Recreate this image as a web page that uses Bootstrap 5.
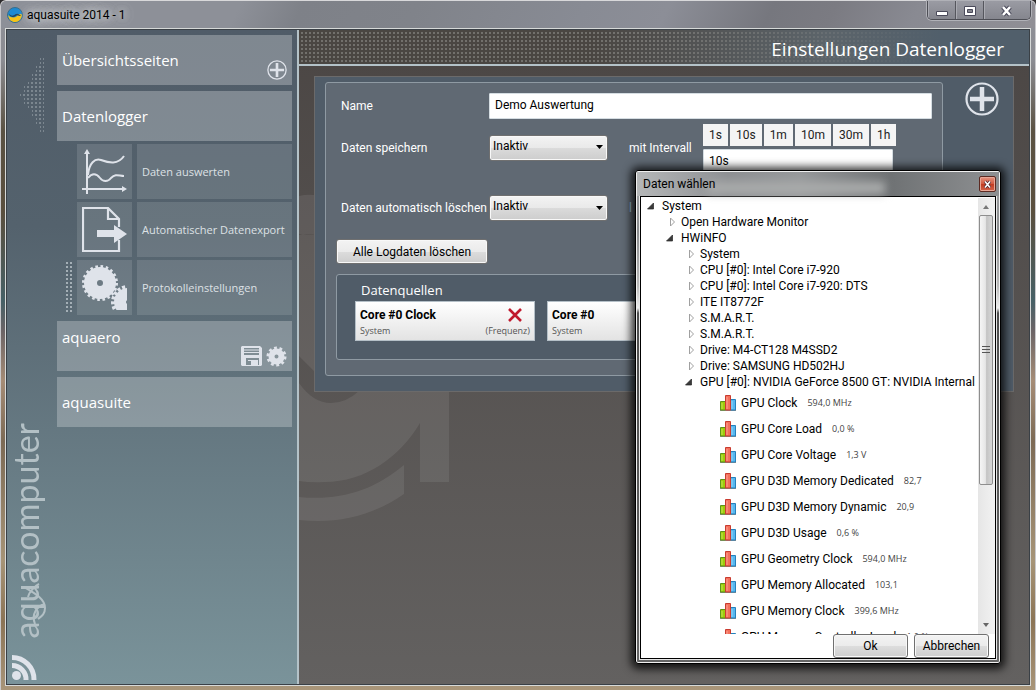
<!DOCTYPE html>
<html lang="de">
<head>
<meta charset="utf-8">
<meta name="viewport" content="width=device-width, initial-scale=1">
<title>aquasuite 2014 - 1</title>
<link href="https://cdn.jsdelivr.net/npm/bootstrap@5.3.0/dist/css/bootstrap.min.css" rel="stylesheet">
<style>
:root{--head:"Open Sans","Noto Sans",sans-serif;--line:#b4c2c8}
body{font:12px/16px Roboto,"Open Sans",sans-serif;color:#000;background:#2c2a2b}
a{color:inherit;text-decoration:none}
.app-window{min-height:100vh;padding:0 4px 4px;border:1px solid #c9c9cc;border-top-color:#d8d8da;border-bottom:0;border-radius:6px 6px 0 0;
 background:linear-gradient(180deg,#8f9198 0,#8b8c92 60px,#5a5243 130px,#5a4f3e 210px,#466066 300px,#6b6466 330px,#a58c76 380px,#7c6a55 440px,#a69477 560px,#8b7456 620px,#a89579 100%)}
.title-bar{height:27px;margin:0 -4px;padding-left:6px;border-radius:6px 6px 0 0;
 background:linear-gradient(115deg,#8d9098 0 23%,#7e8188 29%,#80838a 40%,#888b94 56%,#8c8e97 64%,#76777e 74%,#7b7b82 80%,#898a92 88%,#908f95 100%)}
.title-text{text-shadow:0 0 6px #d5d7da,0 0 10px #c2c5c9,0 0 14px #c2c5c9,0 0 16px #c2c5c9}
.win-buttons{height:19px;border:1px solid #4d4e55;border-top:0;border-radius:0 0 5px 5px;box-shadow:0 0 0 1px #b0b1b7;overflow:hidden}
.win-buttons button{border:0;border-right:1px solid #55565d;box-shadow:inset 1px 0 #aaabb2;background:linear-gradient(#9a9ba3,#85868e);padding:0;width:28px}
.win-buttons button:last-child{width:46px;border:0}
.client{border:1px solid #d6d9d8;outline:1px solid #3a4046;outline-offset:-2px;padding:1px}

/* navigation */
.side-panel{width:292px;background:linear-gradient(#505c68 0,#54626d 30%,#7a939a 100%);border-right:2px solid var(--line);padding:5px 5px 0 0}
.rail{width:50px;padding:23px 0 3px 4px}
.brand{writing-mode:vertical-rl;transform:rotate(180deg);font:34px/30px Lato,sans-serif;color:#b3c0c5}
.swash{position:absolute;left:0;bottom:27px}
.menu-tile{height:50px;padding:0 5px;background:rgba(255,255,255,.27);font:15px/20px var(--head);color:#fff}
.menu-tile.lit{background:rgba(255,255,255,.25)}
.menu-stack{gap:6px}
.sub-list{gap:3px;margin-top:-3px}
.sub-tile{height:55px;background:rgba(255,255,255,.12);color:#dde1e5;font:11px/16px var(--head)}
.sub-icon{width:55px}
.sub-name{width:155px;margin-left:5px;padding-left:5px}
.grip-dots{width:6px;height:54px;margin-right:5px;background:conic-gradient(transparent 75%,#a4afb6 0) 0 2px/4px 4px}
.aero{padding-top:6px}

/* page */
.main-area{background:linear-gradient(#4b4644,#636160)}
.page-head{height:36px;border-bottom:2px solid var(--line);padding-right:25px;color:#fff;font:19px/38px var(--head);
 background:linear-gradient(90deg,#4a4642 40%,#5c646a 72%,#515f6b 88%)}
.page-head::before{content:"";position:absolute;inset:2px 90px 2px 2px;background:conic-gradient(transparent 75%,#9a9a96 0) 0 0/4px 4px;opacity:.5;
 -webkit-mask-image:linear-gradient(90deg,#000 55%,transparent);mask-image:linear-gradient(90deg,#000 55%,transparent)}
.backdrop-logo{position:absolute;left:0;top:36px}
.sheet{margin:10px 15px 0;padding:5px 14px 15px 10px;background:#505c68;border:1px solid #6b6a6a}
.group{border:1px solid #8f9aa3;border-radius:3px;background:#606973;padding:10px 10px 15px}
.form-grid{display:grid;grid-template-columns:148px 119px 95px 1fr;align-items:center;padding-left:5px;color:#fff}
.field{border:1px solid #d5dde2;border-radius:1px;height:26px;padding:0 5px 2px;background:#fff;font-size:12px;color:#000;width:100%}
.name-field{grid-column:2/5}
.pick{appearance:none;-webkit-appearance:none;height:26px;width:119px;border:1px solid #707070;border-radius:3px;padding:0 3px 4px;font-size:12px;color:#000;
 background:url("data:image/svg+xml,%3Csvg xmlns='http://www.w3.org/2000/svg' width='8' height='5'%3E%3Cpath d='M0 0h7L3.500 4z'/%3E%3C/svg%3E") right 3px center/8px 5px no-repeat,linear-gradient(#f3f3f3,#e9e9e9 50%,#dbdbdb 50%,#cdcdcd);box-shadow:inset 0 0 0 1px #f8f8f8}
.second{padding-left:21px;white-space:nowrap}
.hint{color:#9fc0d4}
.late-row{margin-top:19px}
.interval{width:190px;padding:5px 0 1px}
.step-row{gap:2px;margin-bottom:3px}
.step-btn{height:22px;border:0;background:#f4f4f4;padding:0 6px;color:#222;flex:auto}
.grey-btn{border:1px solid #707070;border-radius:3px;box-shadow:inset 0 0 0 1px #f8f8f8;background:linear-gradient(#f3f3f3,#ebebeb 50%,#dddddd 50%,#cdcdcd);height:25px;padding:0;font-size:12px;line-height:16px;color:#000}
.wipe-btn{width:152px;margin-top:18px}
.sources{height:86px;border:1px solid #8f9aa3;border-radius:3px;background:#505c68;margin-top:10px;padding:5px 18px}
.source-head{color:#fff;font:13px/20px var(--head);padding-left:6px}
.source-row{gap:12px;margin-top:1px}
.source-tile{width:180px;height:40px;flex:none;border:1px solid #b5c0c8;background:linear-gradient(#fff,#e3e3e3);padding:4px;color:#555;font:9px/14px var(--head)}
.source-tile b{font:bold 12px/18px Roboto,sans-serif;color:#000}
.plain-btn{border:0;background:none;padding:0;line-height:0}
.add-btn{margin-left:6px}

/* dialog */
.picker{position:absolute;right:34px;top:169px;width:366px;border:1px solid #000;border-radius:3px;padding:0 4px 4px;
 background:linear-gradient(#a3a5a7 0,#8b8d8f 60px,#b9b9b9 115px,#eee 137px,#505050 142px,#666 100%);
 box-shadow:inset 0 0 0 1px #f0f0f0,0 1px 9px 4px rgba(0,0,0,.8)}
.picker-title{height:24px;margin:1px -3px 0;padding:0 3px 0 6px;position:relative;
 background:linear-gradient(90deg,#b5b7b8,#8e9093 25%,#97999b 45%,#6f7274 70%,#8e9092)}
.haze{position:absolute;left:70px;top:10px;width:178px;height:12px;background:#a9abab;filter:blur(4px)}
.close-btn{width:17px;height:16px;border:1px solid #5c2a22;border-radius:2px;box-shadow:inset 0 0 0 1px #e8a796;background:linear-gradient(#e59481,#d2573d 50%,#c03a20 50%,#d4644b);padding:0;line-height:0;position:relative}
.picker-body{border:1px solid #000;outline:1px solid #e8e8e8;background:#fff;padding-top:1px}
.tree-view{height:436px;overflow:hidden}
.tree-view ul{list-style:none;margin:0;padding:0 0 0 19px}
.tree-view .root{padding-left:3px}
.node{height:16px;gap:4px;white-space:nowrap;display:flex;align-items:center}
.node svg{width:14px;height:12px;flex:none}
.tree-view .leaves{padding-left:38px}
.leaf{height:26px;gap:5px;white-space:nowrap;display:flex;align-items:center}
.leaf small{font:9px/14px var(--head);color:#444;margin-left:5px}
.scroll-rail{width:17px;background:linear-gradient(90deg,#e6e6e6,#f2f2f2);padding:0 2px 0 1px}
.scroll-thumb{height:270px;border:1px solid #8e8e8e;border-radius:2px;background:linear-gradient(90deg,#f5f5f5,#e6e6e6 45%,#c4c4c4 55%,#d6d6d6)}
.picker-foot{height:24px;padding-right:6px;gap:6px}
.picker-foot .grey-btn{width:75px;height:24px}
</style>
</head>
<body>
<svg width="0" height="0" class="position-absolute" aria-hidden="true">
 <defs>
 <symbol id="open" viewBox="0 0 14 12"><path d="M9.500 3v6h-6z" fill="#3a3a3a" stroke="#262626" stroke-width=".7"/></symbol>
 <symbol id="shut" viewBox="0 0 14 12"><path d="M7.500 2l4 4-4 4z" fill="#fff" stroke="#a0a0a0"/></symbol>
 <symbol id="bars" viewBox="0 0 16 16"><path d="M0 15.500h16" stroke="#8a8a8a"/><path d="M.5 6.500h5V15h-5z" fill="#9ccc0c" stroke="#5d9419"/><path d="M10.500 4.500h5V15h-5z" fill="#57b7ef" stroke="#2581bd"/><path d="M5.500.5h5V15h-5z" fill="#f4705c" stroke="#c93c30"/><path d="M7 2v12" stroke="#f9a394"/><path d="M12 6v8" stroke="#93d5fa"/><path d="M2 8v6" stroke="#c5e654"/></symbol>
 <symbol id="plus" viewBox="0 0 34 34"><circle cx="17" cy="17" r="15.500" fill="none" stroke="#dfe3ea" stroke-width="2.200"/><path d="M17 5v24M5 17h24" stroke="#dfe3ea" stroke-width="4.500"/></symbol>
 <pattern id="dots" width="4" height="4" patternUnits="userSpaceOnUse"><path d="M0 0h2v2H0z" fill="#7b868f"/></pattern>
 </defs>
</svg>
<div class="app-window d-flex flex-column position-relative">
 <header class="title-bar d-flex">
  <div class="d-flex align-items-center gap-1 flex-grow-1">
   <svg width="16" height="16" viewBox="0 0 16 16"><circle cx="8" cy="8" r="7.500" fill="#1c8ad2" stroke="#3a6d8a"/><path d="M1 8c1 5 3.500 7 7 7 3 0 5.500-1.500 6.500-5l.5-2-1-1c-2 0-3 1-4.500 2.500C7 11 4 11 1 8z" fill="#f6c316"/><path d="M2 6.500c2 3 4.500 2.500 6 1 1.500-1.200 3-1 4 0 .8.800 1.500 1 2.500.5-1 1.500-2.500 1-3.500.5C9 7.500 8.500 10.500 5.500 10 3.500 9.700 2.300 8.500 2 6.500z" fill="#23445b"/></svg>
   <span class="title-text">aquasuite 2014 - 1</span>
  </div>
  <div class="win-buttons d-flex me-1">
   <button aria-label="Minimieren"><svg width="14" height="16"><path d="M1.500 9.500h11v4h-11z" fill="#fff" stroke="#4a4a5a"/></svg></button>
   <button aria-label="Maximieren"><svg width="14" height="16"><path d="M1.500 4.500h11v9h-11z" fill="#fff" stroke="#4a4a5a"/><path d="M4.500 7.500h5v3h-5z" fill="#85868e" stroke="#4a4a5a"/></svg></button>
   <button aria-label="Schließen"><svg width="14" height="16"><path d="M3 5l7 8M10 5l-7 8" stroke="#4a4a5a" stroke-width="4.500"/><path d="M3 5l7 8M10 5l-7 8" stroke="#fff" stroke-width="2.500"/></svg></button>
  </div>
 </header>
 <div class="client d-flex flex-grow-1">
  <aside class="side-panel d-flex flex-shrink-0">
   <div class="rail d-flex flex-column flex-shrink-0 position-relative">
    <svg width="34" height="76" viewBox="0 0 34 76"><path d="M33 0v76h-4v-8h-4v-8h-4v-8h-4v-6h-4v-6h-4v-6h4v-6h4v-6h4v-8h4V8h4V0z" fill="url(#dots)"/></svg>
    <div class="flex-grow-1"></div>
    <div class="brand mb-3">aquacomputer</div>
    <svg class="swash" width="50" height="85" viewBox="0 0 50 85" fill="none" stroke="#b3c0c5" stroke-width="2"><path d="M28 52C24 42 30 34 38 32M17 15C25 20 38 26 38 36 38 42 35 44 31 47M32 12C28 14 22 20 21 25"/></svg>
    <svg width="27" height="27" viewBox="0 0 27 27" fill="none" stroke="#dfe3ea" stroke-width="5"><circle cx="5.500" cy="21.500" r="4.500" fill="#dfe3ea" stroke="none"/><path d="M1 11.500a14 14 0 0 1 14 14.500M1 3.500A22 22 0 0 1 23 26"/></svg>
   </div>
   <nav class="menu-stack flex-grow-1 d-flex flex-column">
    <div class="menu-tile d-flex align-items-center justify-content-between"><a href="#">Übersichtsseiten</a><button class="plain-btn align-self-end pb-1" aria-label="Seite hinzufügen"><svg width="20" height="22"><use href="#plus"/></svg></button></div>
    <div class="menu-tile d-flex align-items-center"><a href="#">Datenlogger</a></div>
    <div class="sub-list d-grid">
     <div class="d-flex justify-content-end"><a href="#" class="sub-tile sub-icon d-flex align-items-center justify-content-center" aria-label="Diagramm"><svg width="46" height="46" viewBox="0 0 46 46" fill="none" stroke="#dfe3ea" stroke-width="2"><path d="M5 45V4M0 40h41"/><path d="M2 5l3-5 3 5zM40 37l5 3-5 3z" fill="#dfe3ea" stroke="none"/><path d="M6 26C7 14 13 9 19 11c8 3 17 5 23-4M6 29c4-5 8-5 12 0 3 4 8 4 11 0 5-5 8-2 13-2"/></svg></a><a href="#" class="sub-tile sub-name d-flex align-items-center">Daten auswerten</a></div>
     <div class="d-flex justify-content-end"><a href="#" class="sub-tile sub-icon d-flex align-items-center justify-content-center" aria-label="Export"><svg width="46" height="46" viewBox="0 0 46 46" fill="none" stroke="#dfe3ea" stroke-width="2.200"><path d="M37 20V12L26 1H1v43h36V33M26 1v11h11"/><path d="M15 23h17v-5l13 9-13 9v-6H15z" fill="#dfe3ea" stroke="none"/></svg></a><a href="#" class="sub-tile sub-name d-flex align-items-center">Automatischer Datenexport</a></div>
     <div class="d-flex justify-content-end"><span class="grip-dots"></span><a href="#" class="sub-tile sub-icon d-flex align-items-center justify-content-center" aria-label="Zahnräder"><svg width="46" height="46" viewBox="0 0 46 46" fill="none" stroke="#dfe3ea"><circle cx="18" cy="18" r="9.500" stroke-width="13"/><circle cx="18" cy="18" r="16.500" stroke-width="3" stroke-dasharray="2.600 2.584"/><svg width="45" height="45"><circle cx="46" cy="37" r="8" stroke-width="12"/><circle cx="46" cy="37" r="15" stroke-width="4" stroke-dasharray="3 1.950"/></svg></svg></a><a href="#" class="sub-tile sub-name d-flex align-items-center">Protokolleinstellungen</a></div>
    </div>
    <div class="menu-tile lit d-flex justify-content-between"><a href="#" class="aero">aquaero</a><span class="d-flex align-self-end gap-1 pb-1"><button class="plain-btn" aria-label="Speichern"><svg width="21" height="21" viewBox="0 0 21 21"><path d="M1 0h18l2 2v17l-1 1H1l-1-1V1z" fill="#dfe3ea"/><path d="M3 2h15v7H3zM5 12h13v7H5z" fill="#7f8d94"/><path d="M3 4h15M3 6.500h15" stroke="#dfe3ea"/><path d="M7 14h10v5h-7v-4H7z" fill="#dfe3ea"/></svg></button><button class="plain-btn" aria-label="Einstellungen"><svg width="21" height="21" viewBox="0 0 21 21" fill="none" stroke="#dfe3ea"><circle cx="10.500" cy="10.500" r="5" stroke-width="6"/><circle cx="10.500" cy="10.500" r="8.500" stroke-width="3" stroke-dasharray="2.800 2.540"/></svg></button></span></div>
    <div class="menu-tile lit d-flex align-items-center"><a href="#">aquasuite</a></div>
   </nav>
  </aside>
  <main class="main-area flex-grow-1 position-relative">
   <svg class="backdrop-logo" width="160" height="460" viewBox="299 65 160 460" fill="#fff" fill-opacity=".08"><path d="M299 195q8-2 15-1h106q29 0 29 29v258h-29v-59c-20 34-55 59-95 59q-14 1-26-1v-98q14 20 32 20 15 0 28-12 12-8 12-50v-70q0-30-30-36h-25q-10-2-17 0zM299 233v122l15 15V234zM299 496c40 4 74-6 105-32v29c-32 22-66 30-105 26z"/></svg>
   <div class="page-head text-end position-relative"><span class="position-relative">Einstellungen Datenlogger</span></div>
   <div class="sheet d-flex gap-3 position-relative">
    <section class="group flex-grow-1">
     <form class="form-grid">
      <label for="nm">Name</label><input id="nm" class="field name-field" value="Demo Auswertung">
      <label for="sv">Daten speichern</label><select id="sv" class="pick"><option>Inaktiv</option></select>
      <label for="iv" class="second">mit Intervall</label>
      <div class="interval">
       <div class="d-flex step-row"><button type="button" class="step-btn">1s</button><button type="button" class="step-btn">10s</button><button type="button" class="step-btn">1m</button><button type="button" class="step-btn">10m</button><button type="button" class="step-btn">30m</button><button type="button" class="step-btn">1h</button></div>
       <input id="iv" class="field" value="10s">
      </div>
      <label for="dl" class="late-row text-nowrap">Daten automatisch löschen</label><select id="dl" class="pick late-row"><option>Inaktiv</option></select><span class="second late-row hint">l</span>
     </form>
     <button class="grey-btn wipe-btn">Alle Logdaten löschen</button>
     <div class="sources">
      <div class="source-head">Datenquellen</div>
      <div class="d-flex source-row overflow-hidden">
       <div class="source-tile"><div class="d-flex justify-content-between"><b>Core #0 Clock</b><button class="plain-btn pe-2" aria-label="Entfernen"><svg width="14" height="14"><path d="M1 1l12 12M13 1L1 13" stroke="#c01a2e" stroke-width="2.600"/></svg></button></div><div class="d-flex justify-content-between"><span>System</span><span>(Frequenz)</span></div></div>
       <div class="source-tile"><b>Core #0</b><div>System</div></div>
      </div>
     </div>
    </section>
    <button class="plain-btn add-btn align-self-start" aria-label="Datenquelle hinzufügen"><svg width="34" height="34"><use href="#plus"/></svg></button>
   </div>
  </main>
 </div>

 <section class="picker" role="dialog" aria-label="Daten wählen">
  <div class="picker-title d-flex align-items-center justify-content-between"><span class="haze"></span><span class="position-relative">Daten wählen</span><button class="close-btn" aria-label="Schließen"><svg width="9" height="9"><path d="M2 1.500l5 6M7 1.500l-5 6" stroke="#4b2530" stroke-width="3"/><path d="M2 1.500l5 6M7 1.500l-5 6" stroke="#fff" stroke-width="1.600"/></svg></button></div>
  <div class="picker-body">
   <div class="d-flex">
    <div class="tree-view flex-grow-1">
     <ul class="root">
      <li><div class="node"><svg><use href="#open"/></svg>System</div>
       <ul>
        <li class="node"><svg><use href="#shut"/></svg>Open Hardware Monitor</li>
        <li><div class="node"><svg><use href="#open"/></svg>HWiNFO</div>
         <ul>
          <li class="node"><svg><use href="#shut"/></svg>System</li>
          <li class="node"><svg><use href="#shut"/></svg>CPU [#0]: Intel Core i7-920</li>
          <li class="node"><svg><use href="#shut"/></svg>CPU [#0]: Intel Core i7-920: DTS</li>
          <li class="node"><svg><use href="#shut"/></svg>ITE IT8772F</li>
          <li class="node"><svg><use href="#shut"/></svg>S.M.A.R.T.</li>
          <li class="node"><svg><use href="#shut"/></svg>S.M.A.R.T.</li>
          <li class="node"><svg><use href="#shut"/></svg>Drive: M4-CT128 M4SSD2</li>
          <li class="node"><svg><use href="#shut"/></svg>Drive: SAMSUNG HD502HJ</li>
          <li><div class="node"><svg><use href="#open"/></svg>GPU [#0]: NVIDIA GeForce 8500 GT: NVIDIA Internal</div>
           <ul class="leaves">
            <li class="leaf"><svg width="16" height="16"><use href="#bars"/></svg>GPU Clock <small>594,0 MHz</small></li>
            <li class="leaf"><svg width="16" height="16"><use href="#bars"/></svg>GPU Core Load <small>0,0 %</small></li>
            <li class="leaf"><svg width="16" height="16"><use href="#bars"/></svg>GPU Core Voltage <small>1,3 V</small></li>
            <li class="leaf"><svg width="16" height="16"><use href="#bars"/></svg>GPU D3D Memory Dedicated <small>82,7</small></li>
            <li class="leaf"><svg width="16" height="16"><use href="#bars"/></svg>GPU D3D Memory Dynamic <small>20,9</small></li>
            <li class="leaf"><svg width="16" height="16"><use href="#bars"/></svg>GPU D3D Usage <small>0,6 %</small></li>
            <li class="leaf"><svg width="16" height="16"><use href="#bars"/></svg>GPU Geometry Clock <small>594,0 MHz</small></li>
            <li class="leaf"><svg width="16" height="16"><use href="#bars"/></svg>GPU Memory Allocated <small>103,1</small></li>
            <li class="leaf"><svg width="16" height="16"><use href="#bars"/></svg>GPU Memory Clock <small>399,6 MHz</small></li>
            <li class="leaf"><svg width="16" height="16"><use href="#bars"/></svg>GPU Memory Controller Load <small>1,0 %</small></li>
           </ul></li>
         </ul></li>
       </ul></li>
     </ul>
    </div>
    <div class="scroll-rail d-flex flex-column">
     <svg width="14" height="17"><path d="M4 11h6L7 7z" fill="#777"/></svg>
     <div class="scroll-thumb d-flex align-items-center justify-content-center"><svg width="8" height="8"><path d="M0 .5h8M0 3.500h8M0 6.500h8" stroke="#555"/></svg></div>
     <svg class="mt-auto" width="14" height="17"><path d="M4 6h6L7 10z" fill="#666"/></svg>
    </div>
   </div>
   <div class="picker-foot d-flex justify-content-end"><button class="grey-btn">Ok</button><button class="grey-btn">Abbrechen</button></div>
  </div>
 </section>
</div>
<script src="https://cdn.jsdelivr.net/npm/bootstrap@5.3.0/dist/js/bootstrap.bundle.min.js"></script>
</body>
</html>
